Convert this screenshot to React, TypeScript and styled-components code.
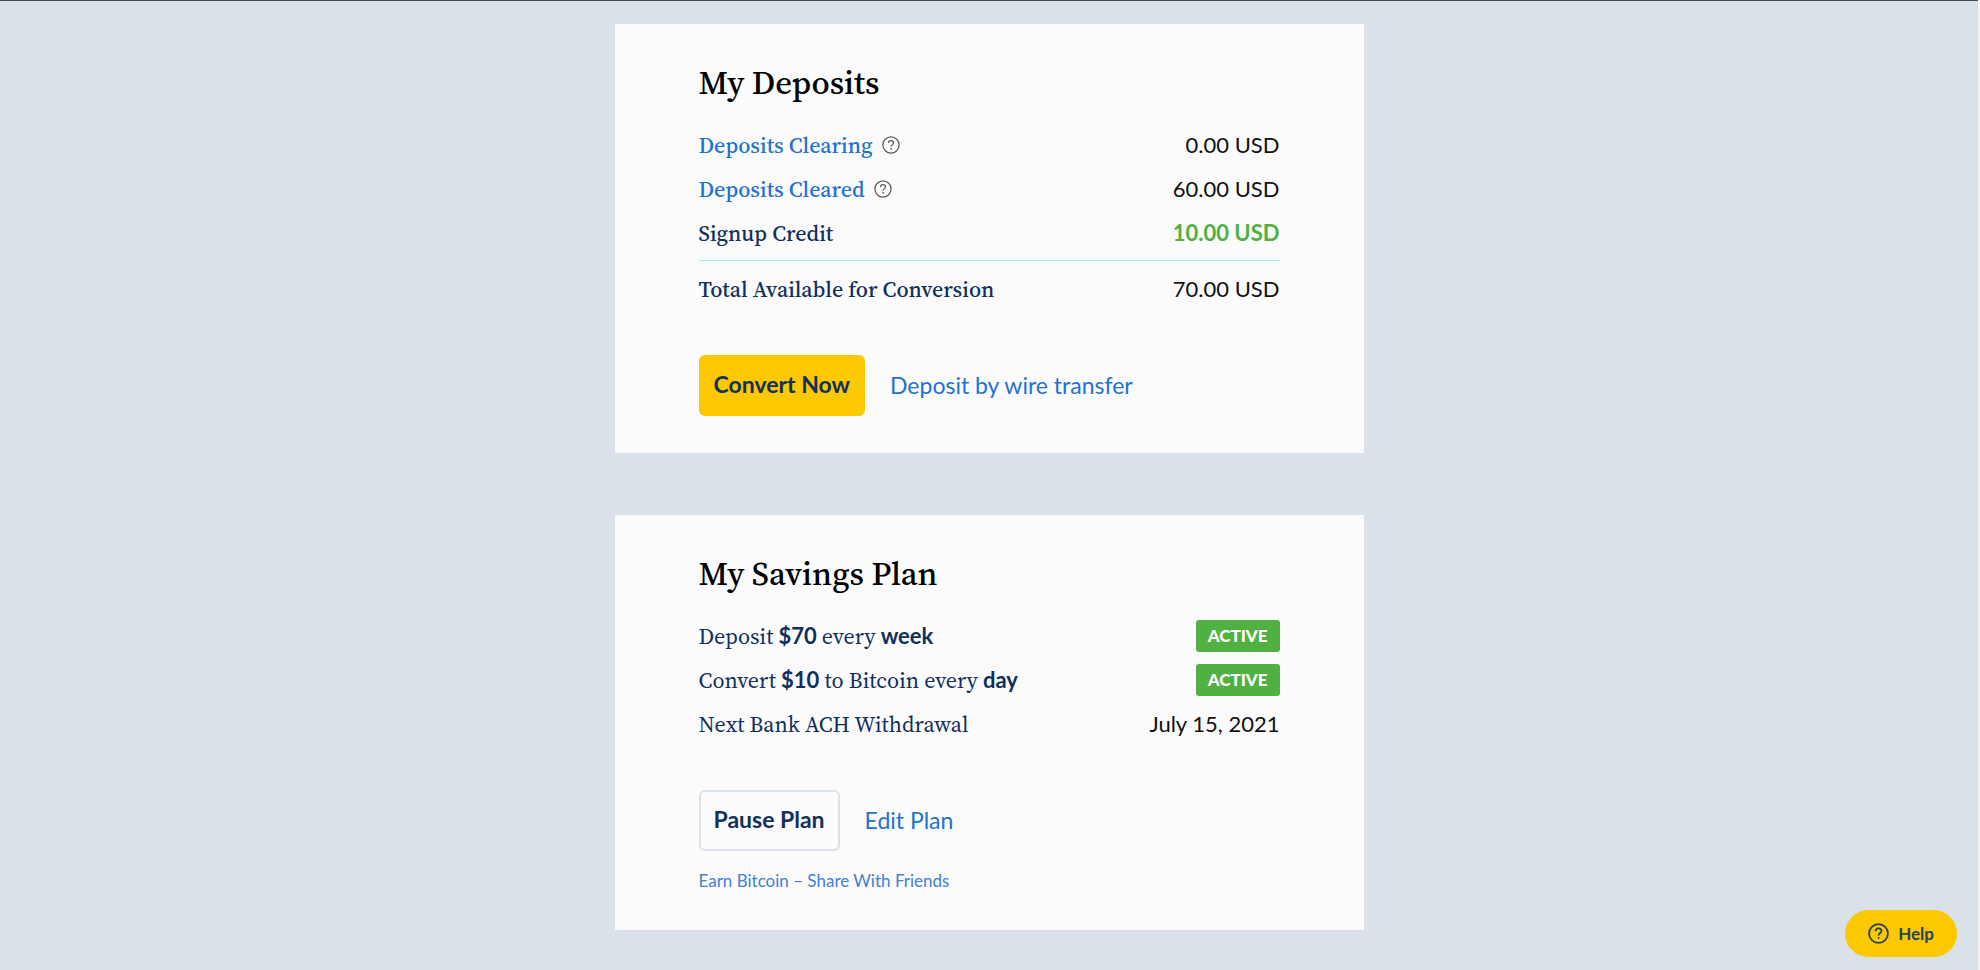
import React from "react";
import styled, { createGlobalStyle, css } from "styled-components";

const serif = `"Source Serif Pro", "Source Serif 4", "Liberation Serif", serif`;
const sans = `Lato, "Liberation Sans", sans-serif`;

const colors = {
  page: "#dae1e9",
  card: "#fbfbfb",
  navy: "#12305c",
  link: "#2272cf",
  green: "#50b142",
  yellow: "#fcc800",
  rule: "#9fecee",
};

const GlobalStyle = createGlobalStyle`
  *, *::before, *::after { box-sizing: border-box; }
  html { background: #f1f1f1; }
  body { margin: 0; font-family: ${sans}; color: #111; }
`;

const Page = styled.div`
  min-height: 100vh;
  margin-right: 2px;
  border-top: 1px solid #45454d;
  background: ${colors.page};
`;

const Column = styled.main`
  display: flex;
  flex-direction: column;
  gap: 62px;
  max-width: 749px;
  margin: 0 auto;
  padding: 23px 0 39px;
`;

const Card = styled.section`
  padding: 37px 84px;
  background: ${colors.card};
`;

const Title = styled.h2`
  margin: 0 0 18px;
  font-family: ${serif};
  font-size: 33px;
  font-weight: 500;
  line-height: 44px;
  color: #000;
`;

const Rows = styled.dl`
  margin: 0;
`;

const Row = styled.div`
  display: flex;
  align-items: center;
  justify-content: space-between;
  height: 44px;
`;

const TotalRow = styled(Row)`
  height: 51px;
  margin-top: 5px;
  padding-top: 6px;
  border-top: 1px solid ${colors.rule};
`;

const Label = styled.dt<{ $medium?: boolean }>`
  display: flex;
  align-items: center;
  gap: 9px;
  font-family: ${serif};
  font-size: 22px;
  font-weight: ${(p) => (p.$medium ? 500 : 400)};
  line-height: 28px;
  color: ${colors.navy};
`;

const Strong = styled.strong`
  font-family: ${sans};
  font-weight: 700;
`;

const Value = styled.dd<{ $credit?: boolean }>`
  margin: 0;
  padding-bottom: 1px;
  font-size: 22px;
  line-height: 28px;
  ${(p) =>
    p.$credit &&
    css`
      font-weight: 700;
      color: ${colors.green};
    `}
`;

const Badge = styled.span`
  display: block;
  padding: 0 12px;
  border-radius: 3px;
  background: ${colors.green};
  color: #fff;
  font-size: 17px;
  font-weight: 900;
  line-height: 32px;
`;

const Actions = styled.div`
  display: flex;
  align-items: center;
  gap: 25px;
  margin-top: 44px;
`;

const Button = styled.button<{ $outline?: boolean }>`
  height: 61px;
  padding: 0 13px 4px;
  border: 2px solid ${(p) => (p.$outline ? colors.page : colors.yellow)};
  border-radius: 6px;
  background: ${(p) => (p.$outline ? "transparent" : colors.yellow)};
  color: ${colors.navy};
  font: 700 23px/28px ${sans};
  cursor: pointer;
`;

const TextLink = styled.a`
  padding-bottom: 2px;
  color: ${colors.link};
  font-size: 23px;
  line-height: 28px;
  text-decoration: none;
`;

const SmallLink = styled(TextLink)`
  color: #4380d3;
  font-size: 17px;
  line-height: 24px;
`;

const LabelLink = styled.a`
  color: ${colors.link};
  text-decoration: none;
`;

const Footnote = styled.p`
  margin: 18px 0 0;
  line-height: 24px;
`;

const HintButton = styled.button`
  display: flex;
  padding: 0;
  border: 0;
  background: none;
  color: #5c5c5c;
`;

const HelpButton = styled.button`
  position: fixed;
  right: 23px;
  bottom: 13px;
  display: flex;
  align-items: center;
  gap: 9px;
  height: 47px;
  padding: 0 23px;
  border: 0;
  border-radius: 24px;
  background: ${colors.yellow};
  color: #26435c;
  font: 700 17px/24px ${sans};
  cursor: pointer;
`;

function QuestionIcon({ size, stroke }: { size: number; stroke: number }) {
  return (
    <svg width={size} height={size} viewBox="0 0 20 20" fill="none" stroke="currentColor" strokeWidth={stroke} aria-hidden="true">
      <circle cx="10" cy="10" r="9" />
      <path d="M7.2 7.8c0-1.7 1.2-2.7 2.8-2.7s2.8 1 2.8 2.5c0 2-2.7 2-2.7 4.3" />
      <circle cx="10.1" cy="14.3" r="0.6" fill="currentColor" strokeWidth="0.8" />
    </svg>
  );
}

function Hint({ label }: { label: string }) {
  return (
    <HintButton type="button" aria-label={label}>
      <QuestionIcon size={18} stroke={1.4} />
    </HintButton>
  );
}

export default function App() {
  return (
    <>
      <GlobalStyle />
      <Page>
        <Column>
          <Card>
            <Title>My Deposits</Title>
            <Rows>
              <Row>
                <Label $medium>
                  <LabelLink href="#clearing">Deposits Clearing</LabelLink>
                  <Hint label="About deposits clearing" />
                </Label>
                <Value>0.00 USD</Value>
              </Row>
              <Row>
                <Label $medium>
                  <LabelLink href="#cleared">Deposits Cleared</LabelLink>
                  <Hint label="About deposits cleared" />
                </Label>
                <Value>60.00 USD</Value>
              </Row>
              <Row>
                <Label $medium>Signup Credit</Label>
                <Value $credit>10.00 USD</Value>
              </Row>
              <TotalRow>
                <Label $medium>Total Available for Conversion</Label>
                <Value>70.00 USD</Value>
              </TotalRow>
            </Rows>
            <Actions>
              <Button type="button">Convert Now</Button>
              <TextLink href="#wire">Deposit by wire transfer</TextLink>
            </Actions>
          </Card>

          <Card>
            <Title>My Savings Plan</Title>
            <Rows>
              <Row>
                <Label>
                  <span>
                    Deposit <Strong>$70</Strong> every <Strong>week</Strong>
                  </span>
                </Label>
                <Value>
                  <Badge>ACTIVE</Badge>
                </Value>
              </Row>
              <Row>
                <Label>
                  <span>
                    Convert <Strong>$10</Strong> to Bitcoin every <Strong>day</Strong>
                  </span>
                </Label>
                <Value>
                  <Badge>ACTIVE</Badge>
                </Value>
              </Row>
              <Row>
                <Label>Next Bank ACH Withdrawal</Label>
                <Value>July 15, 2021</Value>
              </Row>
            </Rows>
            <Actions>
              <Button type="button" $outline>
                Pause Plan
              </Button>
              <TextLink href="#edit">Edit Plan</TextLink>
            </Actions>
            <Footnote>
              <SmallLink href="#share">Earn Bitcoin – Share With Friends</SmallLink>
            </Footnote>
          </Card>
        </Column>
      </Page>
      <HelpButton type="button">
        <QuestionIcon size={21} stroke={1.7} />
        Help
      </HelpButton>
    </>
  );
}
